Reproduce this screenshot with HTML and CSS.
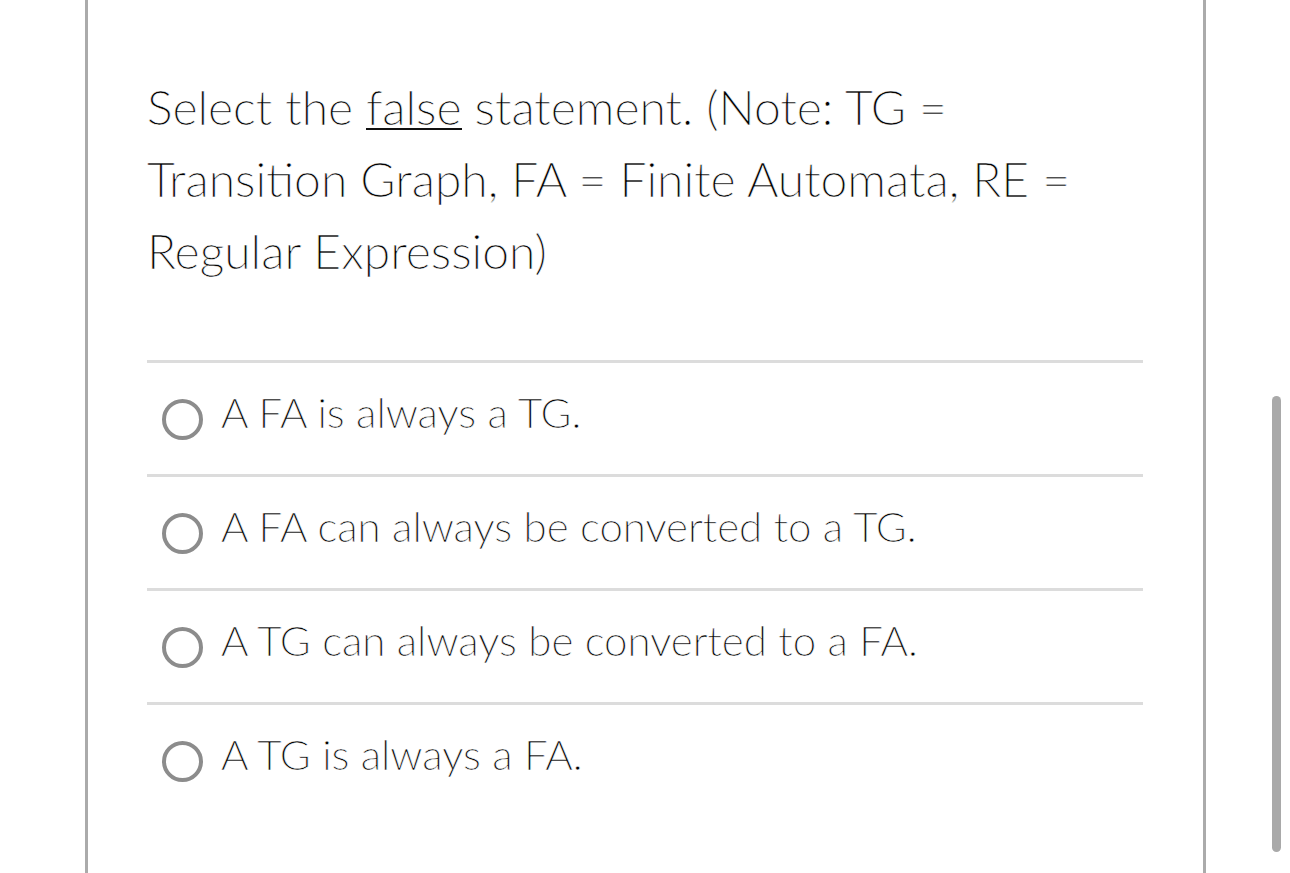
FILE: index.html
```html
<!DOCTYPE html>
<html lang="en">
<head>
<meta charset="utf-8">
<title>Question</title>
<link rel="stylesheet" href="styles.css">
</head>
<body>
<div class="card">
  <p class="question">Select the <u class="emph">false</u> statement. (Note: TG = Transition Graph, FA = Finite Automata, RE = Regular Expression)</p>
  <ul class="options">
    <li class="option"><span class="radio"></span><span class="label">A FA is always a TG.</span></li>
    <li class="option"><span class="radio"></span><span class="label">A FA can always be converted to a TG.</span></li>
    <li class="option"><span class="radio"></span><span class="label">A TG can always be converted to a FA.</span></li>
    <li class="option"><span class="radio"></span><span class="label">A TG is always a FA.</span></li>
  </ul>
</div>
<div class="scrollbar"></div>
</body>
</html>
```
FILE: styles.css
```css
html, body {
  margin: 0;
  padding: 0;
  background: #ffffff;
  overflow: hidden;
}
body {
  font-family: "Lato Light", Lato, "Open Sans", sans-serif;
  font-weight: 300;
  color: #000000;
  -webkit-text-stroke: 0.55px #ffffff;
}
.card {
  box-sizing: border-box;
  margin-left: 85px;
  width: 1121px;
  height: 873px;
  border-left: 3px solid #ababab;
  border-right: 3px solid #ababab;
  padding: 71px 60px 0 59px;
  overflow: hidden;
}
.question {
  margin: 0;
  font-size: 48px;
  line-height: 72px;
  width: 960px;
}
.emph {
  text-decoration: none;
  background-image: linear-gradient(#111111, #111111);
  background-repeat: no-repeat;
  background-size: 100% 2px;
  background-position: 0 50px;
}
.options {
  list-style: none;
  margin: 73px 0 0;
  padding: 0;
}
.option {
  display: flex;
  align-items: flex-start;
  border-top: 3px solid #dcdcdc;
  padding-top: 25px;
  height: 86px;
}
.radio {
  width: 33px;
  height: 33px;
  border: 4px solid #8c8c8c;
  border-radius: 50%;
  margin: 11px 18px 0 15px;
  flex: none;
}
.label {
  font-size: 42px;
  line-height: 48px;
}
.scrollbar {
  position: fixed;
  left: 1272px;
  top: 396px;
  width: 9px;
  height: 456px;
  border-radius: 5px;
  background: #a9a9a9;
}
```
